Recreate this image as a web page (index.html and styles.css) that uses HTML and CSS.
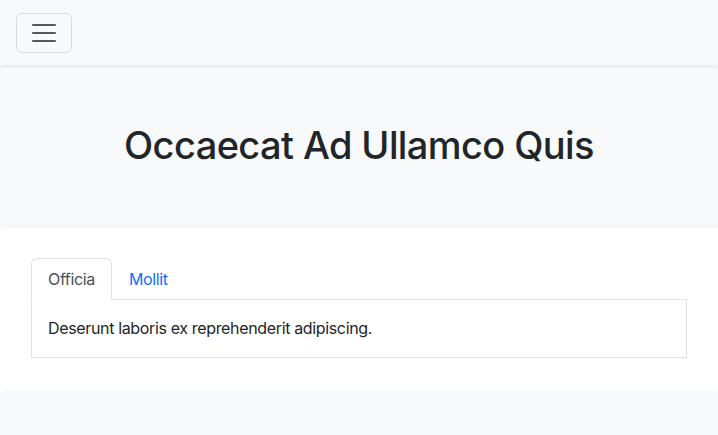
FILE: index.html
```html
<!DOCTYPE html>
<html lang="en">
<head>
<meta charset="utf-8">
<title>Occaecat Ad Ullamco Quis</title>
<link rel="stylesheet" href="styles.css">
</head>
<body>
<nav class="navbar">
  <button class="toggler" type="button" aria-label="Toggle navigation">
    <svg width="30" height="30" viewBox="0 0 30 30" aria-hidden="true">
      <path d="M4 7h22M4 15h22M4 23h22" stroke="rgba(33,37,41,0.75)" stroke-width="2" stroke-linecap="round" fill="none"/>
    </svg>
  </button>
</nav>
<header class="hero">
  <h1 class="hero-title">Occaecat Ad Ullamco Quis</h1>
</header>
<main class="main">
  <ul class="tabs">
    <li class="tab active">Officia</li>
    <li class="tab">Mollit</li>
  </ul>
  <div class="tab-pane">Deserunt laboris ex reprehenderit adipiscing.</div>
</main>
<footer class="footer"></footer>
</body>
</html>
```
FILE: styles.css
```css
* { box-sizing: border-box; }
html, body { margin: 0; padding: 0; }
body {
  font-family: Inter, "Noto Sans", "Liberation Sans", sans-serif;
  font-size: 16px;
  line-height: 1.5;
  letter-spacing: -0.35px;
  color: #212529;
  background: #fff;
}
.navbar {
  background: #f8f9fa;
  padding: 13px 16px 12px;
  box-shadow: 0 2px 4px rgba(0,0,0,0.08);
  position: relative;
  z-index: 2;
}
.toggler {
  display: flex;
  align-items: center;
  justify-content: center;
  width: 56px;
  height: 40px;
  padding: 0;
  background: transparent;
  border: 1px solid rgba(0,0,0,0.12);
  border-radius: 6px;
}
.toggler svg { display: block; }
.hero {
  background: #f8f9fa;
  padding: 56px 16px;
  text-align: center;
  box-shadow: 0 2px 4px rgba(0,0,0,0.06);
  position: relative;
  z-index: 1;
}
.hero-title {
  margin: 0;
  font-size: 38px;
  font-weight: 500;
  line-height: 48px;
  letter-spacing: -0.6px;
}
.main {
  padding: 33px 31px 31px;
}
.tabs {
  display: flex;
  list-style: none;
  margin: 0;
  padding: 0;
  border-bottom: 1px solid #dee2e6;
}
.tab {
  padding: 8px 16px;
  margin-bottom: -1px;
  border: 1px solid transparent;
  border-top-left-radius: 6px;
  border-top-right-radius: 6px;
  color: #0d6efd;
}
.tab.active {
  color: #495057;
  background: #fff;
  border-color: #dee2e6 #dee2e6 #fff;
}
.tab-pane {
  border: 1px solid #dee2e6;
  border-top: 0;
  padding: 16px 16px 17px;
}
.footer {
  background: #f8f9fa;
  height: 60px;
  border-radius: 6px 6px 0 0;
}
```
